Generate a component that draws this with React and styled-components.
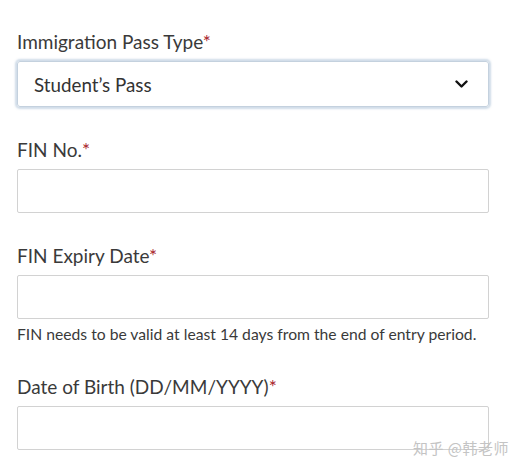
import React from "react"
import styled, { createGlobalStyle } from "styled-components"

const GlobalStyle = createGlobalStyle`
  body {
    margin: 0;
    background: #ffffff;
    font-family: Lato, "Noto Sans", sans-serif;
  }
`

const fields = [
  { id: "pass", label: "Immigration Pass Type", kind: "select", value: "Student\u2019s Pass" },
  { id: "fin", label: "FIN No." },
  {
    id: "expiry",
    label: "FIN Expiry Date",
    hint: "FIN needs to be valid at least 14 days from the end of entry period.",
  },
  { id: "dob", label: "Date of Birth (DD/MM/YYYY)" },
]

const Chevron = () => (
  <svg width="13" height="9" viewBox="0 0 13 9">
    <polyline
      points="1.5,1.5 6.5,6.5 11.5,1.5"
      fill="none"
      stroke="#111"
      strokeWidth="2.4"
      strokeLinecap="round"
      strokeLinejoin="round"
    />
  </svg>
)

const App = () => {
  return (
    <Page>
      <GlobalStyle />
      <Form>
        {fields.map((f) => (
          <Field key={f.id}>
            <Label>
              {f.label}
              <Required>*</Required>
            </Label>
            {f.kind === "select" ? (
              <Select>
                <span>{f.value}</span>
                <Chevron />
              </Select>
            ) : (
              <Input />
            )}
            {f.hint && <Hint>{f.hint}</Hint>}
          </Field>
        ))}
      </Form>
      <Watermark>知乎 @韩老师</Watermark>
    </Page>
  )
}

export default App

const Page = styled.div`
  position: relative;
  width: 527px;
  height: 473px;
  overflow: hidden;
  padding: 31px 0 0 17px;
  box-sizing: border-box;
`
const Form = styled.div`
  width: 472px;
  display: flex;
  flex-direction: column;
  gap: 32px;
`
const Field = styled.div`
  display: flex;
  flex-direction: column;
`
const Label = styled.label`
  font-size: 19px;
  line-height: 22px;
  color: #3a3a3a;
  margin-bottom: 8px;
`
const Required = styled.span`
  color: #a8232a;
`
const Select = styled.div`
  height: 46px;
  box-sizing: border-box;
  border: 1px solid #c4d1de;
  border-radius: 3px;
  box-shadow: 0 0 2px 2px rgba(170, 192, 214, 0.55);
  display: flex;
  align-items: center;
  justify-content: space-between;
  padding: 0 20px 0 16px;
  font-size: 18.8px;
  color: #333;
`
const Input = styled.div`
  height: 44px;
  box-sizing: border-box;
  border: 1px solid #d2d2d2;
  border-radius: 2px;
  background: #fff;
`
const Hint = styled.div`
  margin-top: 6px;
  font-size: 15.7px;
  line-height: 19px;
  color: #3a3a3a;
`
const Watermark = styled.div`
  position: absolute;
  left: 413px;
  top: 437px;
  font-family: "Noto Sans CJK SC", sans-serif;
  font-size: 15px;
  color: #c4c4c4;
  letter-spacing: 0.5px;
`
